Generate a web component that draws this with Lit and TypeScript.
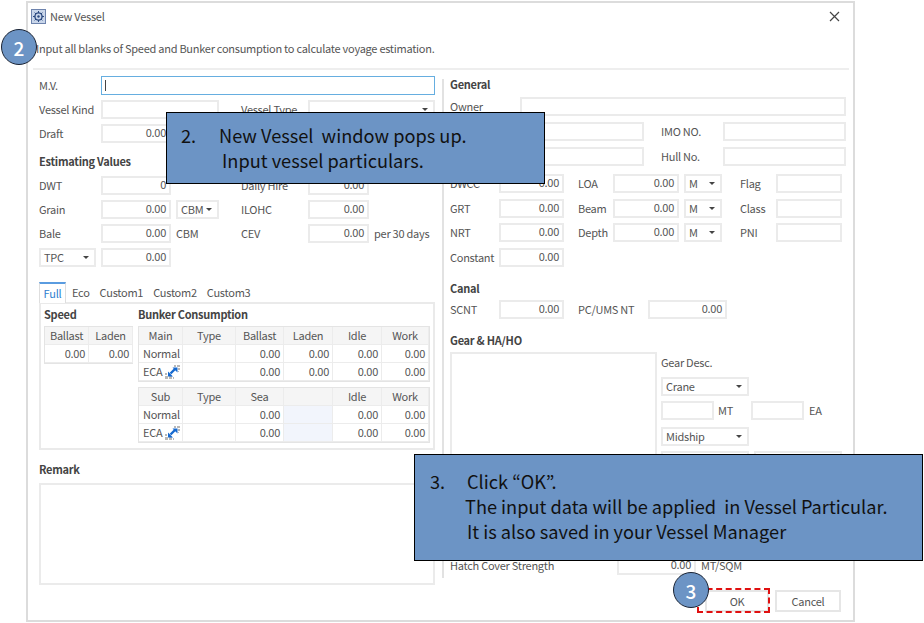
import { LitElement, html, css } from "lit";
import { customElement } from "lit/decorators.js";

const ecaIcon = html`<svg class="eca" viewBox="0 0 16 14" width="16" height="14">
  <g fill="#b8b8b8">
    <rect x="9" y="0" width="2" height="2"/><rect x="12" y="0" width="3" height="2"/>
    <rect x="13" y="3" width="2" height="2"/><rect x="13" y="6" width="1" height="1"/>
    <rect x="0" y="8" width="2" height="2"/><rect x="0" y="11" width="3" height="3"/>
    <rect x="4" y="11" width="3" height="3"/><rect x="8" y="12" width="1" height="2"/>
  </g>
  <path d="M5.500 8.500L10 4" stroke="#1669cf" stroke-width="2.400" fill="none"/>
  <path d="M7.500 2.500h5v5zM3 6.500v5h5z" fill="#1669cf"/>
</svg>`;

const shipIcon = html`<svg viewBox="0 0 15 15" width="15" height="15">
  <rect x="0.5" y="0.5" width="14" height="14" fill="#c9d6ea" stroke="#6d83ad"/>
  <circle cx="7.5" cy="7.5" r="3.6" fill="none" stroke="#2c4a80" stroke-width="1.4"/>
  <circle cx="7.5" cy="7.5" r="1.2" fill="#2c4a80"/>
  <path d="M7.5 2v2M7.5 11v2M2 7.5h2M11 7.5h2M3.6 3.6l1.4 1.4M10 10l1.4 1.4M3.6 11.4L5 10M10 5l1.4-1.4" stroke="#2c4a80" stroke-width="1"/>
</svg>`;

@customElement("app-root")
export class AppRoot extends LitElement {
  static styles = css`
    :host { display: block; width: 924px; height: 623px; position: relative; overflow: hidden; background: #fff;
      font-family: "Noto Sans CJK KR", "Noto Sans", sans-serif; font-size: 11px; letter-spacing: -0.26px; color: #555; }
    * { box-sizing: border-box; }
    .window { position: absolute; left: 26px; top: 1px; width: 829px; height: 621px; border: 2px solid #dcdcdc; background: #fff; }
    .titlebar { height: 26px; display: flex; align-items: center; padding: 0 13px 0 3px; gap: 4px; }
    .titlebar .name { flex: 1; }
    .close { display: block; }
    .desc { margin: 9px 0 0 8px; height: 20px; line-height: 20px; }
    .hr { height: 2px; margin: 10px 4px 0 5px; background: #eeeeee; }
    .main { display: flex; margin: 6px 0 0 11px; }
    .left { width: 396px; }
    .divider { width: 2px; height: 499px; margin: 3px 6px 0 7px; background: #e2e2e2; }
    .right { width: 396px; }

    .row { display: flex; height: 19px; align-items: center; margin-bottom: 5px; }
    .row.gap8 { margin-top: 8px; }
    .row.gap1 { margin-bottom: 6px; }
    .row.gap2 { margin-bottom: 7px; }
    .h { font-weight: 700; color: #444; height: 16px; line-height: 16px; }
    .h-est { margin: 10px 0 7px; }
    .h-gen { margin: 0 0 5px; }
    .h-canal { margin: 13px 0 4px; }
    .h-gear { margin: 13px 0 4px; }
    .h-remark { margin: 11px 0 6px; }

    .f { height: 19px; border: 2px solid #ebebeb; background: #fff; text-align: right; line-height: 13px; padding: 0 3px 0 0; flex: none; white-space: nowrap; }
    .f.active { border: 1px solid #66aee0; display: flex; align-items: center; padding-left: 3px; }
    .caret { width: 1px; height: 11px; background: #444; }
    .s { height: 19px; border: 2px solid #ebebeb; background: #fff; display: flex; align-items: center; justify-content: space-between; padding: 0 5px 0 3px; flex: none; }
    .s span { padding-bottom: 2px; }
    .s::after { content: ""; border-left: 3.5px solid transparent; border-right: 3.5px solid transparent; border-top: 3.5px solid #444; }
    .l { flex: none; white-space: nowrap; padding-bottom: 2px; }

    .lw62 { width: 62px; } .lw67 { width: 67px; } .lw49 { width: 49px; } .lw70 { width: 70px; } .lw35 { width: 35px; } .lw36 { width: 36px; }
    .w70 { width: 70px; } .w61 { width: 61px; } .w118 { width: 118px; } .w127 { width: 127px; } .w334 { width: 334px; }
    .w43 { width: 43px; } .w57 { width: 57px; } .w65 { width: 65px; } .w66 { width: 66px; } .w38 { width: 38px; }
    .w326 { width: 326px; } .w124 { width: 124px; } .w123 { width: 123px; } .w79 { width: 79px; }
    .w88 { width: 88px; } .w53 { width: 53px; } .lw33 { width: 33px; }
    .ml5 { margin-left: 5px; } .ml4 { margin-left: 4px; } .ml22 { margin-left: 22px; } .ml14 { margin-left: 14px; } .ml18 { margin-left: 18px; } .ml17 { margin-left: 17px; }
    .sp70 { width: 70px; flex: none; }

    .tabs { display: flex; height: 21px; margin-top: 14px; position: relative; top: 1px; align-items: stretch; }
    .tab { margin-left: 10px; line-height: 21px; }
    .tab.first { margin-left: 6px; }
    .tab.on { width: 27px; margin: 0; text-align: center; color: #2f80d0; border: 1px solid #dedede; border-top: 2px solid #5a9ce0; border-bottom: none; background: #fff; position: relative; z-index: 1; line-height: 19px; }
    .panel { height: 148px; border: 2px solid #eaeaea; padding: 2px 3px; display: flex; gap: 5px; }
    .panel .h { margin-bottom: 4px; }
    .speedcol { width: 89px; }
    .bunkcol { width: 292px; }
    .g { display: grid; border: 1px solid #e4e4e4; }
    .g.speed { grid-template-columns: 44px 44px; }
    .g.bunk { grid-template-columns: 44px 53px 48px 49px 49px 47px; margin-bottom: 5px; }
    .c { height: 18px; line-height: 17px; border-right: 1px solid #ececec; border-bottom: 1px solid #ececec; padding: 0 3px; text-align: right; white-space: nowrap; }
    .c.th { background: #f5f5f5; text-align: center; }
    .c.t { text-align: left; padding-left: 4px; }
    .c.fill { background: #f2f5fc; }
    .eca { vertical-align: -3px; margin-left: 3px; }

    .remark { height: 102px; border: 2px solid #ebebeb; }
    .gear { display: flex; height: 200px; margin-bottom: 4px; }
    .list { width: 207px; height: 150px; border: 2px solid #ebebeb; margin-right: 4px; }
    .gearcol { flex: 1; }
    .geardesc { height: 20px; line-height: 20px; margin-bottom: 5px; }
    .hatch { width: 167px; }
    .footer { display: flex; justify-content: flex-end; gap: 6px; padding-right: 12px; margin-top: 5px; }
    .btn { height: 22px; border: 2px solid #e6e6e6; text-align: center; line-height: 18px; background: #fff; }
    .ok { width: 64px; } .cancel { width: 66px; }

    .callout { position: absolute; background: #6c94c5; border: 1px solid #000; color: #111; font-size: 18.2px; letter-spacing: 0; line-height: 25px; white-space: pre; }
    .c2 { left: 166px; top: 112px; width: 379px; height: 72px; padding: 10px 0 0 14px; }
    .c3 { left: 414px; top: 454px; width: 509px; height: 107px; padding: 14px 0 0 15px; }
    .c2 .num { display: inline-block; width: 38px; }
    .c3 .num { display: inline-block; width: 37px; }
    .ind2 { padding-left: 41px; }
    .ind3a { padding-left: 35px; }
    .ind3b { padding-left: 37px; }
    .badge { position: absolute; width: 36px; height: 36px; border-radius: 50%; background: #6c94c5; border: 1px solid #1a2333; color: #fff; font-size: 19px; letter-spacing: 0; font-weight: 500; display: flex; align-items: center; justify-content: center; }
    .b2 { left: 1px; top: 29px; }
    .b3 { left: 673px; top: 572px; }
    .dash { position: absolute; left: 697px; top: 588px; width: 73px; height: 25px; border: 2px dashed #e01010; }
  `;

  private f(w: string, v = "") { return html`<div class="f ${w}">${v}</div>`; }
  private s(w: string, v = "") { return html`<div class="s ${w}"><span>${v}</span></div>`; }
  private l(w: string, v: string) { return html`<div class="l ${w}">${v}</div>`; }

  private partRow(a: string, b: string, c: string, cls = "") {
    return html`<div class="row ${cls}">
      ${this.l("lw49", a)}${this.f("w65", "0.00")}
      ${this.l("lw35 ml14", b)}${this.f("w66", "0.00")}
      ${this.s("w38 ml5", "M")}
      ${this.l("lw36 ml18", c)}${this.f("w66")}
    </div>`;
  }

  private cells(values: string[], cls = "") {
    return values.map((v) => html`<div class="c ${cls}">${v}</div>`);
  }

  render() {
    return html`
      <div class="window">
        <div class="titlebar">
          ${shipIcon}
          <span class="name">New Vessel</span>
          <svg class="close" width="11" height="11" viewBox="0 0 11 11"><path d="M1 1l9 9M10 1l-9 9" stroke="#444" stroke-width="1.2"/></svg>
        </div>
        <div class="desc">Input all blanks of Speed and Bunker consumption to calculate voyage estimation.</div>
        <div class="hr"></div>
        <div class="main">
          <div class="left">
            <div class="row">${this.l("lw62", "M.V.")}<div class="f w334 active"><div class="caret"></div></div></div>
            <div class="row">${this.l("lw62", "Vessel Kind")}${this.f("w118")}${this.l("lw67 ml22", "Vessel Type")}${this.s("w127")}</div>
            <div class="row">${this.l("lw62", "Draft")}${this.f("w70", "0.00")}</div>
            <div class="h h-est">Estimating Values</div>
            <div class="row">${this.l("lw62", "DWT")}${this.f("w70", "0")}<div class="sp70"></div>${this.l("lw67", "Daily Hire")}${this.f("w61", "0.00")}</div>
            <div class="row">${this.l("lw62", "Grain")}${this.f("w70", "0.00")}${this.s("w43 ml5", "CBM")}${this.l("lw67 ml22", "ILOHC")}${this.f("w61", "0.00")}</div>
            <div class="row">${this.l("lw62", "Bale")}${this.f("w70", "0.00")}<div class="l w43 ml5">CBM</div>${this.l("lw67 ml22", "CEV")}${this.f("w61", "0.00")}${this.l("ml5", "per 30 days")}</div>
            <div class="row">${this.s("w57", "TPC")}${this.f("w70 ml5", "0.00")}</div>

            <div class="tabs">
              <div class="tab on">Full</div>
              <div class="tab first">Eco</div>
              <div class="tab">Custom1</div>
              <div class="tab">Custom2</div>
              <div class="tab">Custom3</div>
            </div>
            <div class="panel">
              <div class="speedcol">
                <div class="h">Speed</div>
                <div class="g speed">
                  ${this.cells(["Ballast", "Laden"], "th")}
                  ${this.cells(["0.00", "0.00"])}
                </div>
              </div>
              <div class="bunkcol">
                <div class="h">Bunker Consumption</div>
                <div class="g bunk">
                  ${this.cells(["Main", "Type", "Ballast", "Laden", "Idle", "Work"], "th")}
                  <div class="c t">Normal</div>${this.cells(["", "0.00", "0.00", "0.00", "0.00"])}
                  <div class="c t">ECA${ecaIcon}</div>${this.cells(["", "0.00", "0.00", "0.00", "0.00"])}
                </div>
                <div class="g bunk">
                  ${this.cells(["Sub", "Type", "Sea", "", "Idle", "Work"], "th")}
                  <div class="c t">Normal</div><div class="c"></div><div class="c">0.00</div><div class="c fill"></div>${this.cells(["0.00", "0.00"])}
                  <div class="c t">ECA${ecaIcon}</div><div class="c"></div><div class="c">0.00</div><div class="c fill"></div>${this.cells(["0.00", "0.00"])}
                </div>
              </div>
            </div>
            <div class="h h-remark">Remark</div>
            <div class="remark"></div>
          </div>

          <div class="divider"></div>

          <div class="right">
            <div class="h h-gen">General</div>
            <div class="row gap1">${this.l("lw70", "Owner")}${this.f("w326")}</div>
            <div class="row gap1">${this.l("lw70", "")}${this.f("w124")}${this.l("lw62 ml17", "IMO NO.")}${this.f("w123")}</div>
            <div class="row">${this.l("lw70", "")}${this.f("w124")}${this.l("lw62 ml17", "Hull No.")}${this.f("w123")}</div>
            ${this.partRow("DWCC", "LOA", "Flag", "gap8 gap1")}
            ${this.partRow("GRT", "Beam", "Class")}
            ${this.partRow("NRT", "Depth", "PNI", "gap1")}
            <div class="row">${this.l("lw49", "Constant")}${this.f("w65", "0.00")}</div>
            <div class="h h-canal">Canal</div>
            <div class="row">${this.l("lw49", "SCNT")}${this.f("w65", "0.00")}${this.l("lw70 ml14", "PC/UMS NT")}${this.f("w79", "0.00")}</div>
            <div class="h h-gear">Gear &amp; HA/HO</div>
            <div class="gear">
              <div class="list"></div>
              <div class="gearcol">
                <div class="geardesc">Gear Desc.</div>
                <div class="row">${this.s("w88", "Crane")}</div>
                <div class="row gap2">${this.f("w53")}${this.l("ml4 lw33", "MT")}${this.f("w53")}${this.l("ml5", "EA")}</div>
                <div class="row">${this.s("w88", "Midship")}</div>
                <div class="row">${this.s("w88")}${this.s("w88 ml5")}</div>
              </div>
            </div>
            <div class="row">${this.l("hatch", "Hatch Cover Strength")}${this.f("w79", "0.00")}${this.l("ml5", "MT/SQM")}</div>
          </div>
        </div>
        <div class="footer">
          <div class="btn ok">OK</div>
          <div class="btn cancel">Cancel</div>
        </div>
      </div>

      <div class="callout c2"><div><span class="num">2.</span>New Vessel  window pops up.</div><div class="ind2">Input vessel particulars.</div></div>
      <div class="callout c3"><div><span class="num">3.</span>Click “OK”.</div><div class="ind3a">The input data will be applied  in Vessel Particular.</div><div class="ind3b">It is also saved in your Vessel Manager</div></div>
      <div class="dash"></div>
      <div class="badge b2">2</div>
      <div class="badge b3">3</div>
    `;
  }
}
